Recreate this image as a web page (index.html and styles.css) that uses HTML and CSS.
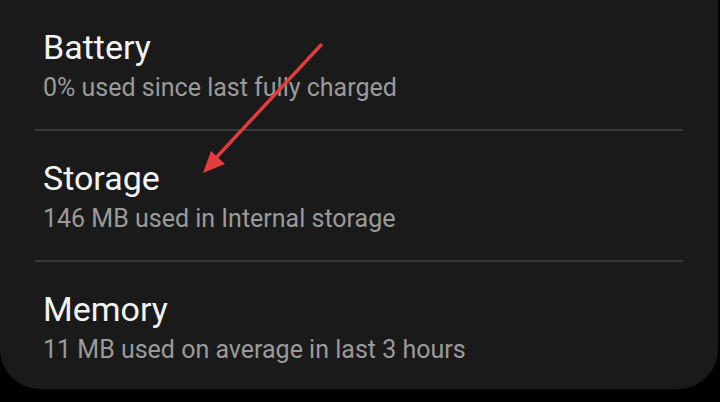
FILE: index.html
```html
<!DOCTYPE html>
<html lang="en">
  <head>
    <meta charset="UTF-8" />
    <meta name="viewport" content="width=device-width, initial-scale=1.0" />
    <title>Device care</title>
    <link rel="stylesheet" href="styles.css">
  </head>
  <body>
    <div class="card">
      <ul class="settings">
        <li class="item">
          <div class="item-title">Battery</div>
          <div class="item-summary">0% used since last fully charged</div>
        </li>
        <li class="item">
          <div class="item-title">Storage</div>
          <div class="item-summary">146 MB used in Internal storage</div>
        </li>
        <li class="item">
          <div class="item-title">Memory</div>
          <div class="item-summary">11 MB used on average in last 3 hours</div>
        </li>
      </ul>

      <!-- annotation arrow -->
      <svg class="arrow" width="720" height="402" viewBox="0 0 720 402">
        <line x1="321" y1="45" x2="214" y2="160" stroke="#e23c3c" stroke-width="3.4" stroke-linecap="round" />
        <polygon points="203,173 211,151 225,164" fill="#e23c3c" />
      </svg>
    </div>
  </body>
</html>
```

FILE: styles.css
```css
body {
  margin: 0;
  padding: 0;
  background-color: #000;
  font-family: Roboto, "Noto Sans", sans-serif;
  overflow: hidden;
}

.card {
  position: relative;
  width: 718px;
  height: 389px;
  background-color: #1a1a1a;
  border-radius: 0 0 40px 40px;
  overflow: hidden;
}

.settings {
  list-style: none;
  margin: 0;
  padding: 0;
}

.item {
  margin: 0 35px;
  padding: 27px 0 26px 8px;
  border-bottom: 2px solid #383838;
}

.item:last-child {
  border-bottom: none;
}

.item-title {
  color: #f4f4f4;
  font-size: 34px;
  line-height: 40px;
}

.item-summary {
  margin-top: 6px;
  color: #9a9a9a;
  font-size: 25px;
  line-height: 30px;
}

.arrow {
  position: absolute;
  top: 0;
  left: 0;
  pointer-events: none;
}
```
